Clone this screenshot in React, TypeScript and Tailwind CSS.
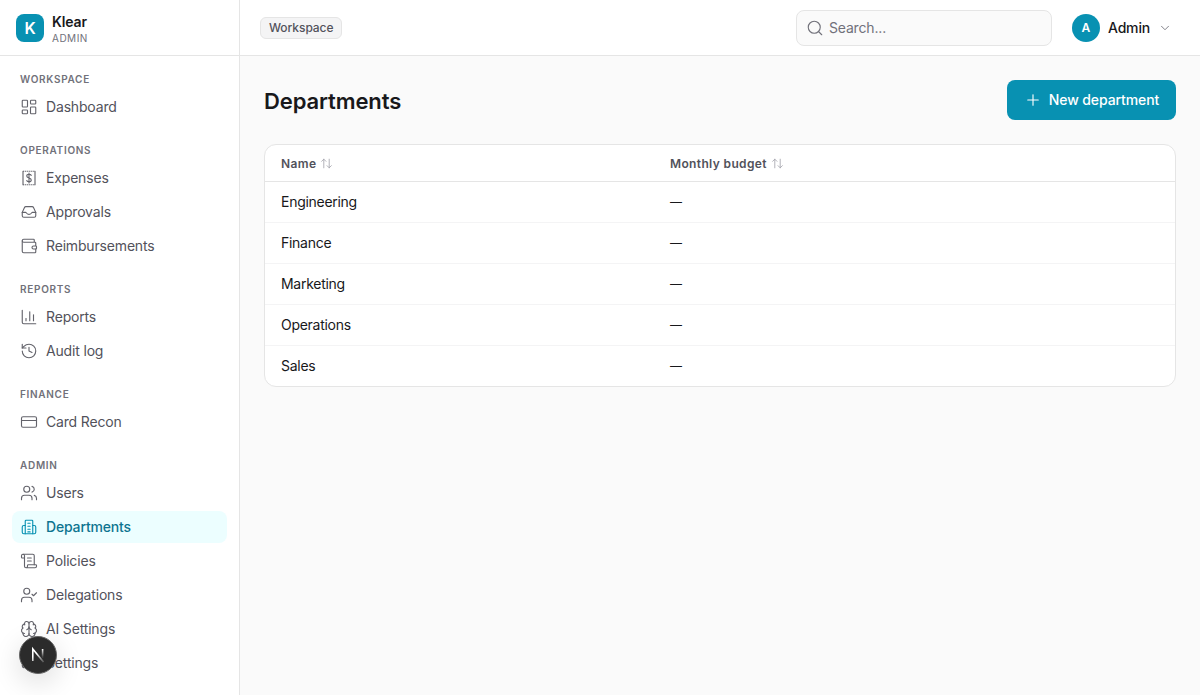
import { LayoutDashboard, Wallet, ChartColumn, History, CreditCard, Users, ScrollText, UserCheck, Brain, Settings, Search, ChevronDown, Plus, ArrowUpDown } from "lucide-react";
import type { ComponentType } from "react";

type IconProps = { className?: string; strokeWidth?: number };
type Item = { label: string; icon: ComponentType<IconProps>; active?: boolean };

const ExpenseIcon = ({ className, strokeWidth }: IconProps) => (
  <svg className={className} viewBox="0 0 24 24" fill="none" stroke="currentColor" strokeWidth={strokeWidth} strokeLinecap="round" strokeLinejoin="round">
    <path d="M4 3v18M20 3v18" />
    <path d="M4 3h16M4 21h16" strokeDasharray="1.8 0.9" strokeLinecap="butt" />
    <path d="M15 8.5c-.6-1-1.7-1.5-3-1.5-1.7 0-3 .9-3 2.4 0 3.3 6 1.9 6 5.2 0 1.5-1.3 2.4-3 2.4-1.3 0-2.4-.5-3-1.5M12 5.5v13" />
  </svg>
);

const TrayIcon = ({ className, strokeWidth }: IconProps) => (
  <svg className={className} viewBox="0 0 24 24" fill="none" stroke="currentColor" strokeWidth={strokeWidth} strokeLinecap="round" strokeLinejoin="round">
    <path d="M3 12.5 6 6a2 2 0 0 1 1.8-1.2h8.4A2 2 0 0 1 18 6l3 6.5V17a2 2 0 0 1-2 2H5a2 2 0 0 1-2-2z" />
    <path d="M3 12.5h4.5c1 0 1.6 2.7 4.5 2.7s3.5-2.7 4.5-2.7H21" />
  </svg>
);

const TowerIcon = ({ className, strokeWidth }: IconProps) => (
  <svg className={className} viewBox="0 0 24 24" fill="none" stroke="currentColor" strokeWidth={strokeWidth} strokeLinecap="round" strokeLinejoin="round">
    <path d="M7 21V4a1 1 0 0 1 1-1h8a1 1 0 0 1 1 1v17" />
    <path d="M7 10H5a2 2 0 0 0-2 2v7a2 2 0 0 0 2 2h14a2 2 0 0 0 2-2v-7a2 2 0 0 0-2-2h-2" />
    <path d="M10.5 7h3M10.5 11h3M10.5 15h3M10.5 18.5h3" />
  </svg>
);

const sections: { title: string; items: Item[] }[] = [
  { title: "Workspace", items: [{ label: "Dashboard", icon: LayoutDashboard }] },
  { title: "Operations", items: [{ label: "Expenses", icon: ExpenseIcon }, { label: "Approvals", icon: TrayIcon }, { label: "Reimbursements", icon: Wallet }] },
  { title: "Reports", items: [{ label: "Reports", icon: ChartColumn }, { label: "Audit log", icon: History }] },
  { title: "Finance", items: [{ label: "Card Recon", icon: CreditCard }] },
  { title: "Admin", items: [{ label: "Users", icon: Users }, { label: "Departments", icon: TowerIcon, active: true }, { label: "Policies", icon: ScrollText }, { label: "Delegations", icon: UserCheck }, { label: "AI Settings", icon: Brain }, { label: "Settings", icon: Settings }] },
];

const rows = ["Engineering", "Finance", "Marketing", "Operations", "Sales"];

export default function App() {
  return (
    <div className="flex h-[695px] w-[1200px] overflow-hidden bg-[#fafafa] font-['Inter',sans-serif] text-[#18181b]">
      <aside className="relative flex h-full w-[240px] shrink-0 flex-col overflow-hidden border-r border-[#e5e5e5] bg-white">
        <div className="flex h-[56px] shrink-0 items-center gap-2 border-b border-[#e5e5e5] px-4">
          <div className="flex h-7 w-7 items-center justify-center rounded-lg bg-[#0891b2] text-base font-semibold text-white">K</div>
          <div className="flex flex-col">
            <span className="mt-px text-sm leading-5 font-semibold tracking-[-0.01em]">Klear</span>
            <span className="text-[10px] leading-[12px] tracking-[0.05em] text-[#71717a]">ADMIN</span>
          </div>
        </div>
        <nav className="flex flex-col gap-5 px-3 pt-4">
          {sections.map((s) => (
            <div key={s.title} className="flex flex-col">
              <div className="mb-1 px-2 text-[10px] leading-[15px] font-semibold tracking-[0.07em] text-[#71717a] uppercase">{s.title}</div>
              <div className="flex flex-col gap-0.5">
                {s.items.map((it) => {
                  const Icon = it.icon;
                  return (
                    <div key={it.label} className={`flex h-8 items-center gap-2 rounded-lg px-2 text-sm tracking-[-0.012em] ${it.active ? "bg-[#ecfeff] font-medium text-[#0e7490]" : "text-[#52525b]"}`}>
                      <Icon className={`h-[18px] w-[18px] shrink-0 ${it.active ? "text-[#0891b2]" : "text-[#63636b]"}`} strokeWidth={1.5} />
                      <span>{it.label}</span>
                    </div>
                  );
                })}
              </div>
            </div>
          ))}
        </nav>
        <div className="absolute top-[636px] left-[19px] flex h-[38px] w-[38px] items-center justify-center rounded-full border border-[#666] bg-[#2b2b2b] shadow-[0_8px_28px_rgba(0,0,0,0.14)]">
          <svg viewBox="0 0 20 20" className="h-5 w-5" fill="none" strokeWidth="1.6">
            <defs>
              <linearGradient id="nd" x1="6" y1="5" x2="15" y2="16" gradientUnits="userSpaceOnUse">
                <stop offset="0.3" stopColor="#fff" />
                <stop offset="1" stopColor="#fff" stopOpacity="0.25" />
              </linearGradient>
              <linearGradient id="nr" x1="14" y1="4" x2="14" y2="12" gradientUnits="userSpaceOnUse">
                <stop offset="0" stopColor="#fff" />
                <stop offset="1" stopColor="#fff" stopOpacity="0.1" />
              </linearGradient>
            </defs>
            <path d="M4.8 16V4L15.5 17" stroke="url(#nd)" />
            <path d="M14.6 4v9" stroke="url(#nr)" />
          </svg>
        </div>
      </aside>
      <div className="flex min-w-0 flex-1 flex-col">
        <header className="flex h-[56px] shrink-0 items-center justify-between border-b border-[#e5e5e5] bg-white pr-6 pl-5">
          <span className="rounded-md border border-[#e5e5e5] bg-[#f4f4f5] px-2 py-[2px] text-xs leading-[16px] font-medium tracking-[-0.005em] text-[#52525b]">Workspace</span>
          <div className="flex items-center">
            <div className="flex h-9 w-64 items-center gap-[5px] rounded-lg border border-[#e5e5e5] bg-[#fafafa] px-[9px] text-sm tracking-[-0.012em] text-[#71717a]">
              <Search className="h-[18px] w-[18px]" strokeWidth={1.5} />
              <span>Search...</span>
            </div>
            <div className="ml-5 flex items-center gap-2 pr-1">
              <div className="flex h-7 w-7 items-center justify-center rounded-full bg-[#0891b2] text-xs font-semibold text-white">A</div>
              <span className="text-sm font-medium tracking-[-0.012em]">Admin</span>
              <ChevronDown className="h-3.5 w-3.5 text-[#71717a]" strokeWidth={1.5} />
            </div>
          </div>
        </header>
        <main className="flex flex-col gap-6 p-6">
          <div className="flex items-center justify-between">
            <h1 className="pt-0.5 text-[22px] font-semibold tracking-[-0.005em]">Departments</h1>
            <button className="flex h-10 w-[169px] items-center justify-center gap-[7px] rounded-lg bg-[#0891b2] text-sm font-medium tracking-[-0.007em] text-white">
              <Plus className="h-[18px] w-[18px]" strokeWidth={1.5} />
              New department
            </button>
          </div>
          <div className="overflow-hidden rounded-xl border border-[#e5e5e5] bg-white">
            <div className="grid h-[37px] grid-cols-[389px_1fr] items-center border-b border-[#e5e5e5] px-4 pt-px text-xs font-semibold tracking-[0.03em] text-[#52525b]">
              <div className="flex items-center gap-1">Name<ArrowUpDown className="h-[13px] w-[13px] text-[#a1a1aa]" strokeWidth={1.5} /></div>
              <div className="flex items-center gap-1">Monthly budget<ArrowUpDown className="h-[13px] w-[13px] text-[#a1a1aa]" strokeWidth={1.5} /></div>
            </div>
            {rows.map((r, i) => (
              <div key={r} className={`grid grid-cols-[389px_1fr] items-center px-4 text-sm tracking-[-0.02em] ${i < rows.length - 1 ? "h-[41px] border-b border-[#f4f4f5]" : "h-[40px]"}`}>
                <div>{r}</div>
                <div className="text-xs font-medium">—</div>
              </div>
            ))}
          </div>
        </main>
      </div>
    </div>
  );
}
